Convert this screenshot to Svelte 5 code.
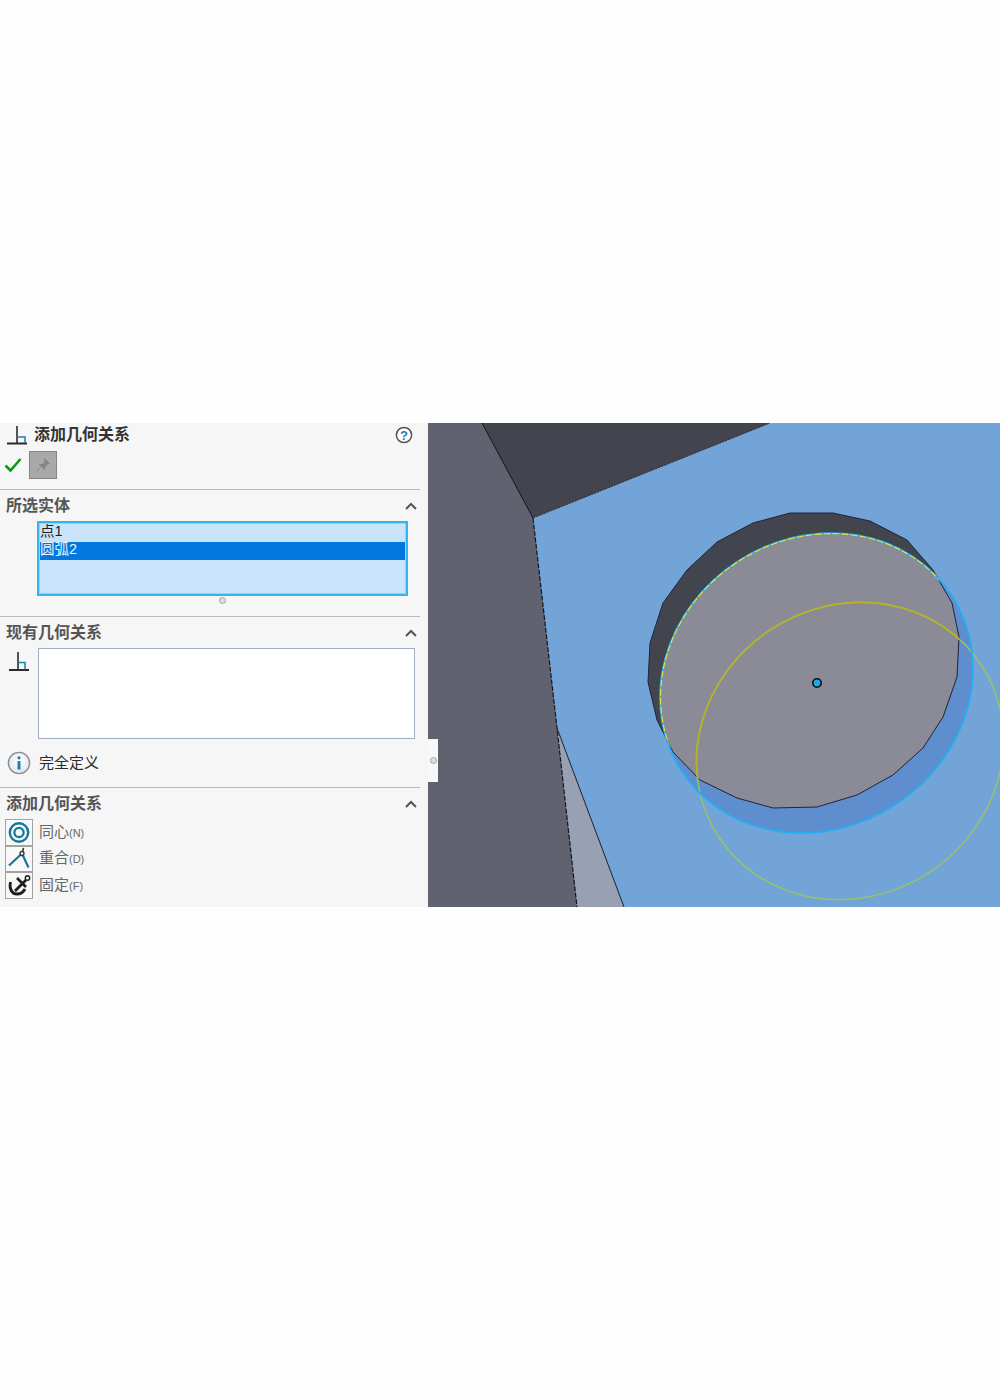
<script>
  const holePoints =
    "790,513 833,513 870,521 907,540 933,570 952,603 959,637 957,677 943,717 923,748 893,775 857,795 817,807 773,808 737,798 700,780 673,752 657,720 648,682 650,643 663,603 687,570 717,542 753,523";

  const relations = [
    { label: "同心", key: "(N)", icon: "concentric" },
    { label: "重合", key: "(D)", icon: "coincident" },
    { label: "固定", key: "(F)", icon: "fixed" },
  ];
</script>

<main class="page">
  <div class="window">
    <aside class="panel">
      <div class="title">
        <svg class="perp" width="22" height="24" viewBox="0 0 22 24">
          <path d="M0 20.5h20" stroke="#2b2b2b" stroke-width="2" />
          <path d="M10 3v18" stroke="#2b2b2b" stroke-width="1.6" />
          <path d="M10 14h8v6" fill="none" stroke="#1f7fa8" stroke-width="1.5" />
        </svg>
        <h1>添加几何关系</h1>
        <svg class="help" width="18" height="18" viewBox="0 0 18 18">
          <circle cx="9" cy="9" r="7.6" fill="#fff" stroke="#555" stroke-width="1.5" />
          <text x="9" y="13.5" text-anchor="middle" class="help-mark">?</text>
        </svg>
      </div>

      <div class="actions">
        <svg width="18" height="16" viewBox="0 0 18 16">
          <path d="M1.5 8.5l5 5L16.5 2" fill="none" stroke="#0b9a12" stroke-width="2.6" />
        </svg>
        <button class="pin" aria-label="pin">
          <svg width="16" height="16" viewBox="0 0 16 16">
            <path d="M9.5 1.5l5 5-2 .6-2.6 2.6-.4 3-5-5 3-.4 2.6-2.6zM5.5 10.5L1.8 14.2" fill="#858585" stroke="#858585" stroke-width="1" />
          </svg>
        </button>
      </div>

      <section class="group first">
        <header>
          <h2>所选实体</h2>
          <svg class="chevron" width="12" height="8" viewBox="0 0 12 8"><path d="M1 7l5-5 5 5" fill="none" stroke="#555" stroke-width="2" /></svg>
        </header>
        <div class="selection">
          <div class="row">点1</div>
          <div class="row active">圆弧2</div>
        </div>
        <div class="grip"><span class="dot"></span></div>
      </section>

      <section class="group">
        <header>
          <h2>现有几何关系</h2>
          <svg class="chevron" width="12" height="8" viewBox="0 0 12 8"><path d="M1 7l5-5 5 5" fill="none" stroke="#555" stroke-width="2" /></svg>
        </header>
        <div class="existing">
          <svg width="22" height="24" viewBox="0 0 22 24">
            <path d="M1 22h20" stroke="#2b2b2b" stroke-width="2" />
            <path d="M10 4v18" stroke="#2b2b2b" stroke-width="1.6" />
            <path d="M10 14.5h7v7" fill="none" stroke="#1f7fa8" stroke-width="1.5" />
          </svg>
          <div class="existing-box"></div>
        </div>
        <div class="status">
          <svg width="24" height="24" viewBox="0 0 24 24">
            <defs>
              <radialGradient id="infoFill" cx="0.5" cy="0.4" r="0.6">
                <stop offset="0" stop-color="#ffffff" />
                <stop offset="1" stop-color="#dfe6ec" />
              </radialGradient>
            </defs>
            <circle cx="12" cy="12" r="10.6" fill="url(#infoFill)" stroke="#8a8f94" stroke-width="1.4" />
            <circle cx="12" cy="6.8" r="1.6" fill="#1f7fa8" />
            <path d="M12 10v8.5" stroke="#1f7fa8" stroke-width="3" />
          </svg>
          <span>完全定义</span>
        </div>
      </section>

      <section class="group">
        <header>
          <h2>添加几何关系</h2>
          <svg class="chevron" width="12" height="8" viewBox="0 0 12 8"><path d="M1 7l5-5 5 5" fill="none" stroke="#555" stroke-width="2" /></svg>
        </header>
        <ul class="relations">
          {#each relations as rel}
            <li>
              <span class="rel-icon">
                <svg width="26" height="25" viewBox="0 0 26 25">
                  {#if rel.icon === "concentric"}
                    <circle cx="13" cy="12.5" r="9.2" fill="none" stroke="#11779c" stroke-width="2.4" />
                    <circle cx="13" cy="12.5" r="4.6" fill="none" stroke="#11779c" stroke-width="2.2" />
                  {:else if rel.icon === "coincident"}
                    <path d="M3 19.5L16 7.5l6.5 14" fill="none" stroke="#11779c" stroke-width="2.2" />
                    <path d="M16.5 6l1-4" stroke="#333" stroke-width="1.6" />
                    <circle cx="16" cy="7.5" r="2" fill="#f8f8f8" stroke="#333" stroke-width="1.3" />
                  {:else}
                    <path d="M20 7L9 18" stroke="#1e1e1e" stroke-width="2.8" />
                    <path d="M11 5l9 9" stroke="#1e1e1e" stroke-width="2.6" />
                    <path d="M4.5 9c-1.5 6 1 12 6.5 12 3.5 0 6.5-2 8-5" fill="none" stroke="#1e1e1e" stroke-width="2.8" />
                    <circle cx="21.5" cy="5" r="2.2" fill="#f8f8f8" stroke="#1e1e1e" stroke-width="1.4" />
                  {/if}
                </svg>
              </span>
              <span class="rel-label">{rel.label}<small>{rel.key}</small></span>
            </li>
          {/each}
        </ul>
      </section>
    </aside>

    <div class="viewport">
      <svg width="572" height="484" viewBox="428 423 572 484">
        <defs>
          <clipPath id="faceClip">
            <ellipse cx="816.5" cy="683" rx="161" ry="145" transform="rotate(-33 816.5 683)" />
          </clipPath>
          <clipPath id="holeClip">
            <polygon points={holePoints} />
          </clipPath>
        </defs>

        <rect x="428" y="423" width="572" height="484" fill="#60636f" />
        <polygon points="482,423 770,423 533,518" fill="#43454e" />
        <polygon points="533,518 770,423 1000,423 1000,907 624,907 557,728" fill="#73a4d7" />
        <polygon points="557,728 624,907 577,907" fill="#98a0b4" />
        <path d="M482 423L533 518" stroke="#15161c" stroke-width="1" />
        <path d="M533 518L770 423" stroke="#2c2f3a" stroke-width="1" stroke-dasharray="2 1" />
        <path d="M533 518L557 728L577 907" stroke="#15161c" stroke-width="1.2" stroke-dasharray="5 1.5" fill="none" />
        <path d="M557 728L624 907" stroke="#1d2430" stroke-width="1" />

        <ellipse cx="816.5" cy="683" rx="161" ry="145" transform="rotate(-33 816.5 683)" fill="#5f8ecf" />
        <polygon points={holePoints} fill="#43454e" />
        <polygon points={holePoints} fill="#8a8b96" clip-path="url(#faceClip)" />
        <polygon points={holePoints} fill="none" stroke="#22243c" stroke-width="1" />

        <ellipse cx="850" cy="751" rx="157" ry="145" transform="rotate(-33 850 751)" fill="none" stroke="#9bc168" stroke-width="1.5" />
        <g clip-path="url(#holeClip)">
          <ellipse cx="850" cy="751" rx="157" ry="145" transform="rotate(-33 850 751)" fill="none" stroke="#b9b125" stroke-width="1.7" />
        </g>

        <ellipse cx="816.5" cy="683" rx="161" ry="145" transform="rotate(-33 816.5 683)" fill="none" stroke="#22aef2" stroke-width="1.8" />
        <g clip-path="url(#holeClip)">
          <ellipse cx="816.5" cy="683" rx="160.5" ry="144.5" transform="rotate(-33 816.5 683)" fill="none" stroke="#eee62a" stroke-width="1.1" stroke-dasharray="7 2" />
        </g>

        <circle cx="817" cy="683" r="4.2" fill="#17a8f0" stroke="#0a0a0a" stroke-width="1.6" />
      </svg>
      <div class="handle"><span class="dot"></span></div>
    </div>
  </div>
</main>

<style>
  :global(body) {
    background: #fefefe;
  }
  .page {
    height: 1400px;
    padding-top: 423px;
    box-sizing: border-box;
    font-family: "Noto Sans CJK SC", "Noto Sans", sans-serif;
  }
  .window {
    display: flex;
    height: 484px;
  }
  .panel {
    width: 428px;
    flex: none;
    background: #f6f6f6;
    box-sizing: border-box;
    padding-right: 8px;
    display: flex;
    flex-direction: column;
    color: #4a4a4a;
  }
  .viewport {
    position: relative;
    width: 572px;
    height: 484px;
  }
  .viewport svg {
    display: block;
  }
  .handle {
    position: absolute;
    left: 0;
    top: 316px;
    width: 10px;
    height: 43px;
    background: #f8f8f8;
    display: flex;
    align-items: center;
    justify-content: center;
  }
  .dot {
    display: block;
    width: 7px;
    height: 7px;
    box-sizing: border-box;
    border-radius: 50%;
    background: #dcdcdc;
    border: 1.5px solid #a8a8a8;
  }
  h1,
  h2 {
    margin: 0 0 4px;
    font-size: 16px;
    line-height: 20px;
    font-weight: 700;
  }
  h1 {
    color: #333;
    margin-left: 5px;
  }
  h2 {
    color: #555;
  }
  .title {
    height: 23px;
    display: flex;
    align-items: center;
    padding-left: 7px;
  }
  .help {
    margin-left: auto;
    margin-right: 7px;
  }
  .help-mark {
    font-family: "Liberation Sans", sans-serif;
    font-size: 13px;
    font-weight: 700;
    fill: #1a7fb0;
  }
  .actions {
    height: 28px;
    margin-top: 5px;
    display: flex;
    align-items: center;
    gap: 7px;
    padding-left: 4px;
  }
  .pin {
    width: 28px;
    height: 28px;
    padding: 0;
    background: #a9a9a9;
    border: 1.5px solid #858585;
    box-sizing: border-box;
    display: flex;
    align-items: center;
    justify-content: center;
  }
  .group {
    border-top: 1.5px solid #bcbcbc;
  }
  .group.first {
    margin-top: 10px;
  }
  .group header {
    height: 31px;
    display: flex;
    align-items: center;
    justify-content: space-between;
    padding: 0 3px 0 6px;
    box-sizing: border-box;
  }
  .selection {
    margin-left: 37px;
    width: 371px;
    height: 75px;
    box-sizing: border-box;
    border: 2px solid #35b4ee;
    outline: 1px solid #9fd0f0;
    outline-offset: -3px;
    background: #c9e3fa;
    padding: 1px;
    font-family: "Liberation Sans", "Noto Sans CJK SC", sans-serif;
    font-size: 14.5px;
    color: #222;
  }
  .row {
    height: 18px;
    line-height: 15px;
  }
  .row.active {
    background: #0078dd;
    color: #e8f4ff;
  }
  .grip {
    height: 20px;
    display: flex;
    justify-content: center;
    padding-top: 1px;
    padding-left: 24px;
    box-sizing: border-box;
  }
  .existing {
    display: flex;
    gap: 8px;
    padding-left: 8px;
  }
  .existing-box {
    width: 377px;
    height: 91px;
    box-sizing: border-box;
    background: #fff;
    border: 1.5px solid #a0acc6;
  }
  .status {
    height: 48px;
    display: flex;
    align-items: center;
    gap: 8px;
    padding-left: 7px;
    font-size: 15px;
    color: #2a2a2a;
  }
  .status span {
    margin-bottom: 3px;
  }
  .relations {
    list-style: none;
    margin: 0 0 0 5px;
    padding: 0;
  }
  .relations li {
    height: 26.6px;
    display: flex;
    align-items: center;
    gap: 6px;
  }
  .rel-icon {
    width: 28px;
    height: 26.6px;
    box-sizing: border-box;
    border: 1px solid #a2a2a2;
    background: #f8f8f8;
    display: flex;
    align-items: center;
    justify-content: center;
  }
  .rel-label {
    font-size: 15px;
    color: #666;
    margin-bottom: 4px;
  }
  .rel-label small {
    font-family: "Liberation Sans", sans-serif;
    font-size: 11px;
  }
</style>
